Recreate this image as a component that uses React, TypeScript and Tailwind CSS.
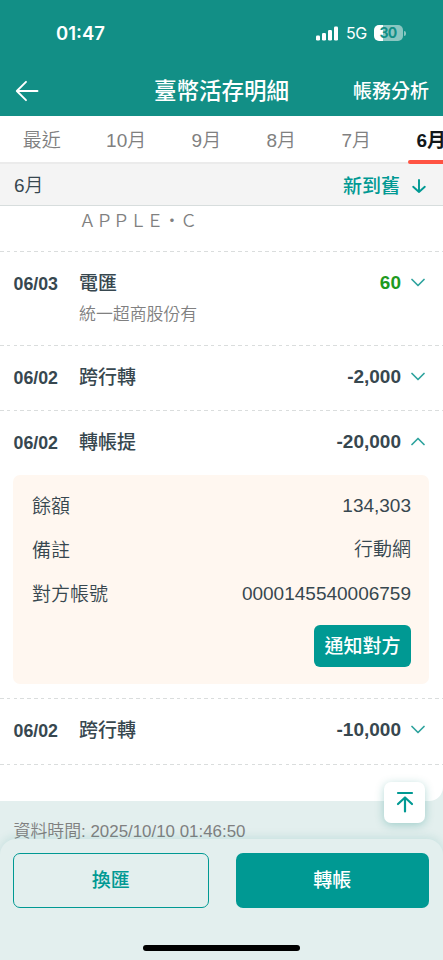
import React from "react";

type Entry = {
  date: string;
  title: string;
  note?: string;
  amount: string;
  income?: boolean;
  open?: boolean;
  height: string;
};

const months = ["最近", "10月", "9月", "8月", "7月"];

const entries: Entry[] = [
  { date: "06/03", title: "電匯", note: "統一超商股份有", amount: "60", income: true, height: "h-[93px]" },
  { date: "06/02", title: "跨行轉", amount: "-2,000", height: "h-[64px]" },
  { date: "06/02", title: "轉帳提", amount: "-20,000", open: true, height: "h-[64px]" },
  { date: "06/02", title: "跨行轉", amount: "-10,000", height: "h-[65px]" },
];

const details = [
  ["餘額", "134,303"],
  ["備註", "行動網"],
  ["對方帳號", "0000145540006759"],
];

function StatusBar() {
  return (
    <div className="flex h-[66px] items-center justify-between pl-[56px] pr-[37px] font-['Inter','Liberation_Sans',sans-serif]">
      <span className="text-[18.5px] leading-none font-semibold">01:47</span>
      <div className="flex items-center">
        <svg width="23" height="15" viewBox="0 0 23 15" fill="currentColor">
          <rect x="0" y="9.5" width="4" height="5" rx="1.2" />
          <rect x="6" y="7" width="4" height="7.5" rx="1.2" />
          <rect x="12" y="4" width="4" height="10.5" rx="1.2" />
          <rect x="18" y="0.5" width="4" height="14" rx="1.2" />
        </svg>
        <span className="ml-[7px] text-[16px] leading-none font-normal tracking-[-0.3px]">5G</span>
        <div className="ml-[7px] flex items-center">
          <div className="flex h-4 w-[29px] items-center justify-center rounded-[5px] bg-linear-to-r from-white from-31% to-[#8ac6c1] to-31% pr-px text-[14px] leading-4 font-bold tracking-[-0.8px] text-[#128f86]">
            30
          </div>
          <div className="ml-px h-[5px] w-[2px] rounded-r-full bg-[#8ac6c1]" />
        </div>
      </div>
    </div>
  );
}

function Header() {
  return (
    <header className="h-[116px] shrink-0 bg-[#128f86] text-white">
      <StatusBar />
      <div className="grid h-[50px] grid-cols-[1fr_auto_1fr] items-center px-[14px]">
        <svg className="ml-[1px]" width="24" height="22" viewBox="0 0 24 22" fill="none" stroke="currentColor" strokeWidth="1.9" strokeLinecap="round" strokeLinejoin="round">
          <path d="M22.5 11H2M11 1.8L1.8 11L11 20.2" />
        </svg>
        <h1 className="pt-[2px] text-[22.5px] leading-none font-medium">臺幣活存明細</h1>
        <span className="justify-self-end pt-px text-[19px] leading-none font-medium">帳務分析</span>
      </div>
    </header>
  );
}

function Tabs() {
  return (
    <nav className="flex h-12 shrink-0 overflow-hidden border-b-2 border-[#ebebeb] text-[19px] text-[#808080]">
      {months.map((m) => (
        <div key={m} className="flex shrink-0 items-center px-[22.7px] pt-[4px] font-[350]">{m}</div>
      ))}
      <div className="flex shrink-0 items-center px-[22.7px] pt-[4px] font-bold text-[#12181b]">
        6月
      </div>
    </nav>
  );
}

function Chevron({ up }: { up?: boolean }) {
  return (
    <svg className="mb-[2px]" width="14" height="9" viewBox="0 0 14 9" fill="none" stroke="#2fa39e" strokeWidth="1.7" strokeLinecap="round" strokeLinejoin="round">
      <path d={up ? "M1 7.5L7 1.5L13 7.5" : "M1 1.5L7 7.5L13 1.5"} />
    </svg>
  );
}

function Dashes() {
  return (
    <div className="h-px bg-[repeating-linear-gradient(90deg,#dadddd_0px,#dadddd_3.6px,transparent_3.6px,transparent_6.8px)]" />
  );
}

function Details() {
  return (
    <div className="mr-[14px] mb-[14px] ml-[13px] h-[209px] rounded-[7px] bg-[#fff7f0] pt-[9px] pr-[18px] pl-[19px]">
      {details.map(([label, value]) => (
        <div key={label} className="flex h-11 items-center justify-between font-[350]">
          <span className="pt-[2px]">{label}</span>
          <span className="pt-px">{value}</span>
        </div>
      ))}
      <div className="flex justify-end pt-[9px]">
        <button className="h-[42px] w-[97px] rounded-[6px] bg-[#009993] text-[19px] leading-none font-medium text-white">
          通知對方
        </button>
      </div>
    </div>
  );
}

function EntryRow({ entry }: { entry: Entry }) {
  return (
    <>
      <div className={entry.height + " pt-[17px]"}>
        <div className="flex h-7 items-center pl-[13.5px] pr-[18px] font-bold">
          <span className="w-[65.5px] pt-[3px] text-[17.8px]">{entry.date}</span>
          <span className="grow pt-[3px] font-medium">{entry.title}</span>
          <span className={entry.income ? "mr-[10px] text-[#1f9a1f]" : "mr-[10px]"}>{entry.amount}</span>
          <Chevron up={entry.open} />
        </div>
        {entry.note && (
          <p className="mt-[5px] pl-[79px] text-[16.9px] leading-[26px] font-[350] text-[#808080]">{entry.note}</p>
        )}
      </div>
      {entry.open && <Details />}
      <Dashes />
    </>
  );
}

function App() {
  return (
    <div className="relative flex h-[960px] w-[443px] flex-col overflow-hidden bg-white font-['Liberation_Sans','Noto_Sans_CJK_TC',sans-serif] text-[19px] text-[#37474f]">
      <Header />
      <Tabs />
      <div className="absolute top-[160px] left-[407.5px] h-1 w-12 rounded-full bg-[#ff5343]" />
      <div className="flex h-[42px] shrink-0 items-center justify-between border-b border-[#d7dddd] bg-[#f4f4f4] pt-[3px] pr-[17px] pl-[14px]">
        <span className="font-[350]">6月</span>
        <span className="flex items-center gap-[12px] pt-[2px] font-medium text-[#009993]">
          新到舊
          <svg className="mb-[2px]" width="14" height="14" viewBox="0 0 14 14" fill="none" stroke="currentColor" strokeWidth="1.9" strokeLinecap="round" strokeLinejoin="round">
            <path d="M7 1V13M1.2 7.8L7 13L12.8 7.8" />
          </svg>
        </span>
      </div>
      <main className="flex grow flex-col bg-[#e3efee]">
        <div className="h-[595px] shrink-0 rounded-br-[14px] bg-white">
          <div className="h-[45px] pt-[3px] pl-[79px] text-[16.9px] leading-[26px] font-[350] text-[#808080]">ＡＰＰＬＥ‧Ｃ</div>
          <Dashes />
          {entries.map((entry, i) => (
            <EntryRow key={i} entry={entry} />
          ))}
        </div>
        <p className="h-[38px] shrink-0 pt-[19px] pl-[13.5px] text-[16.9px] leading-6 font-[350] whitespace-nowrap text-[#808080]">
          資料時間: 2025/10/10 01:46:50
        </p>
        <footer className="relative flex h-[121px] shrink-0 gap-[27px] rounded-t-[16px] bg-[#e3efee] pt-[14px] pr-[14px] pl-[13px] text-[19px] font-medium shadow-[0_-2px_10px_rgba(0,130,120,0.13)]">
          <button className="h-[55px] flex-1 rounded-[7px] border border-[#009993] pt-px text-[#009993]">換匯</button>
          <button className="h-[55px] flex-1 rounded-[7px] bg-[#009993] pt-px text-white">轉帳</button>
        </footer>
      </main>
      <button className="absolute top-[782px] left-[384px] flex h-[41px] w-[41px] items-center justify-center rounded-[7px] bg-white text-[#009993] shadow-[0_2px_10px_rgba(0,130,120,0.3)]">
        <svg className="mb-[2px]" width="18" height="22" viewBox="0 0 18 22" fill="none" stroke="currentColor" strokeWidth="2.2" strokeLinecap="round" strokeLinejoin="round">
          <path d="M2 2H16M9 6.5V20.5M2 13L9 6.5L16 13" />
        </svg>
      </button>
      <div className="absolute top-[945px] left-[143px] h-[6px] w-[157px] rounded-full bg-black" />
    </div>
  );
}

export default App;
